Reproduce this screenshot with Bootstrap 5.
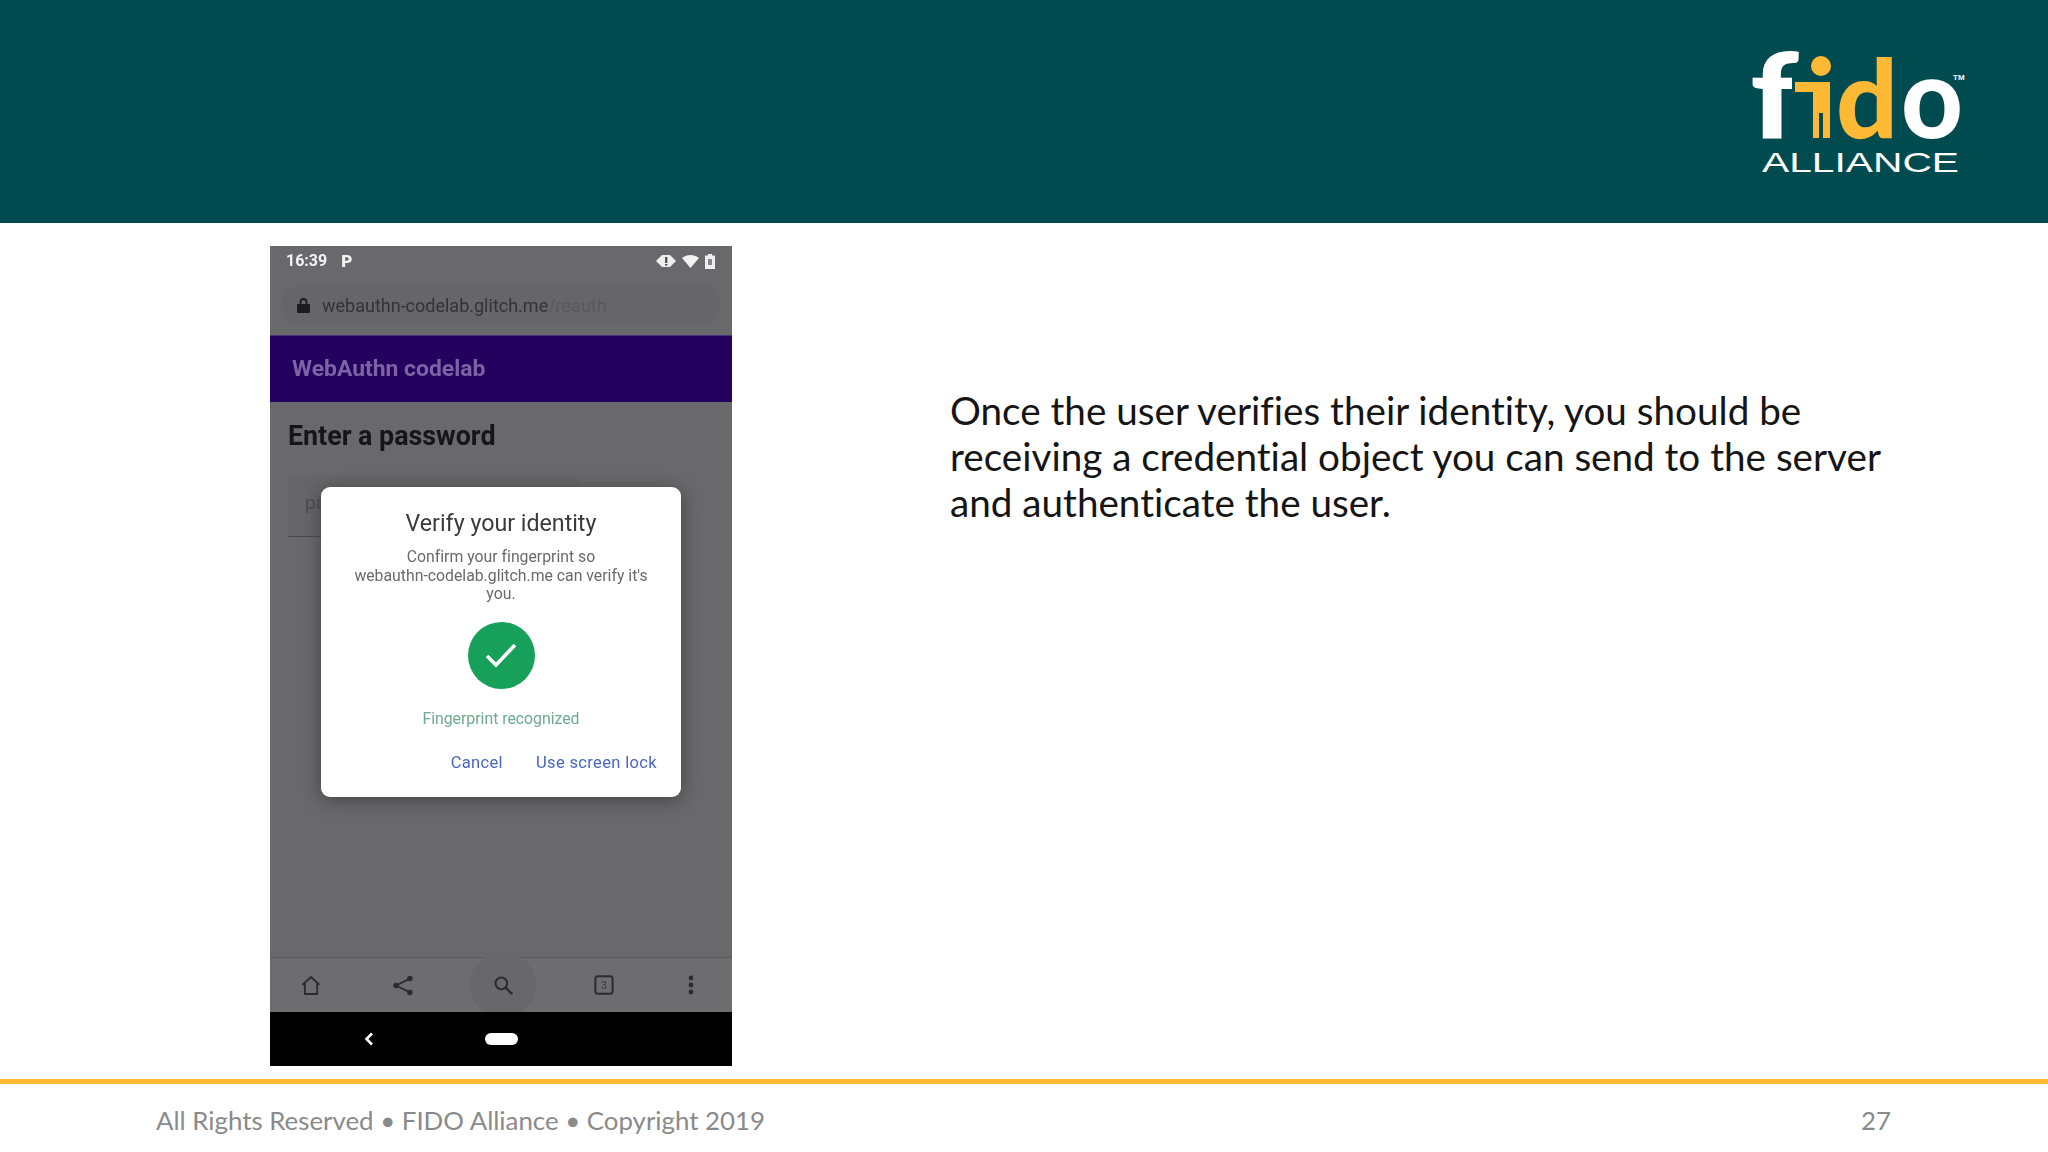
<!doctype html>
<html lang="en">
<head>
<meta charset="utf-8">
<title>FIDO Alliance slide</title>
<link href="https://cdn.jsdelivr.net/npm/bootstrap@5.3.0/dist/css/bootstrap.min.css" rel="stylesheet">
<style>
html,body{height:100%;}
body{font-family:"Lato","Liberation Sans",sans-serif;background:#fff;overflow:hidden;font-variant-ligatures:none;}
.slide-head{height:223px;background:#004b50;flex:none;}
.fido-logo{display:block;width:270px;height:160px;margin:30px 58px 0 0;overflow:visible;}
.slide-main{flex:1 1 auto;min-height:0;padding:23px 0 0 270px;gap:218px;}
.phone{width:462px;height:820px;flex:none;background:#69686b;font-family:"Roboto","Liberation Sans",sans-serif;filter:blur(.55px);}
.status-row{height:36px;padding:0 17px 6px 16px;color:#f2f2f2;font-size:16px;font-weight:700;line-height:1;flex:none;}
.p-glyph{margin-left:14px;font-size:17px;font-weight:900;}
.status-icons{gap:6px;}
.addr-wrap{height:53px;padding:3px 11px 10px 11px;flex:none;}
.addr-pill{height:40px;background:#666568;border-radius:20px;padding-left:16px;gap:12px;font-size:18px;color:#333335;}
.addr-fade{color:#59585c;}
.app-bar{height:67px;background:#24005f;padding-left:22px;font-size:22.9px;font-weight:700;color:#7c63a3;flex:none;border-top:1px solid #4a2f7c;}
.app-body{flex:1 1 auto;padding:19px 19px 0 18px;min-height:0;}
.page-title{font-size:26.8px;font-weight:700;color:#161618;line-height:30px;margin:0;}
.fake-input{margin:25px 0 0 0;height:61px;width:290px;background:#666568;border-bottom:1px solid #4a4a4c;padding:13px 0 0 17px;font-size:19px;color:#4d4d50;}
.verify-box{left:51px;top:241px;width:360px;height:310px;background:#fff;border-radius:9px;box-shadow:0 3px 18px rgba(30,30,30,.5);padding:21px 0 0;}
.verify-title{font-size:23.2px;line-height:30px;color:#3a3a3c;margin:0;}
.verify-copy{font-size:15.8px;line-height:18.5px;color:#6a6a6c;margin:10px 0 0;}
.check-disc{width:67px;height:67px;border-radius:50%;background:#17a05a;margin-top:18px;}
.verify-ok{font-size:15.8px;line-height:18px;color:#6fab8d;margin:21px 0 0;}
.verify-actions{gap:33px;padding-right:24px;margin-top:26px;font-size:16.5px;line-height:18px;color:#4a67bd;letter-spacing:.35px;}
.tool-row{height:55px;background:#6d6c6f;border-top:1px solid #5b5a5d;flex:none;}
.t-a{margin-left:31px;}.t-b{margin-left:72px;}.t-c{margin-left:57px;}.t-d{margin-left:58px;}.t-e{margin-left:74px;}
.search-halo{width:66px;height:66px;border-radius:50%;background:#686769;flex:none;}
.nav-row{height:54px;background:#000;flex:none;}
.nav-back{margin-left:94px;}
.nav-home{width:33px;height:12px;background:#fff;border-radius:6px;margin-left:111px;}
.slide-copy{width:940px;margin-top:141px;font-size:38.65px;line-height:46px;color:#151515;}
.slide-foot{height:73px;flex:none;border-top:5px solid #fdb933;padding:4px 157px 0 156px;font-size:25.85px;color:#8a8a8a;}
</style>
</head>
<body class="d-flex flex-column">
<header class="slide-head d-flex justify-content-end align-items-start">
  <svg class="fido-logo" viewBox="0 0 270 160" role="img" aria-label="FIDO Alliance logo">
    <g font-family="Lato,'Liberation Sans',sans-serif" font-weight="900" fill="#fff">
      <text x="30" y="108" font-size="118" textLength="49" lengthAdjust="spacingAndGlyphs">f</text>
      <text x="116" y="108" font-size="108" fill="#fdb933" textLength="62" lengthAdjust="spacingAndGlyphs">d</text>
      <text x="181" y="108" font-size="112" textLength="62" lengthAdjust="spacingAndGlyphs">o</text>
    </g>
    <rect x="72" y="46" width="10" height="18" fill="#004b50"/>
    <circle cx="101" cy="36" r="10" fill="#fdb933"/>
    <path fill="#fdb933" d="M75 52H110V108H103V83H99V108H93V62H75Z"/>
    <text x="233" y="50" font-family="'Liberation Sans',sans-serif" font-weight="700" font-size="8" fill="#fff">TM</text>
    <text x="42" y="142" font-family="'Liberation Sans',sans-serif" font-size="28" fill="#fff" textLength="197" lengthAdjust="spacingAndGlyphs">ALLIANCE</text>
  </svg>
</header>

<main class="slide-main d-flex align-items-start">
  <div class="phone position-relative d-flex flex-column">
    <div class="status-row d-flex align-items-center justify-content-between">
      <div class="d-flex align-items-center"><span>16:39</span><span class="p-glyph">P</span></div>
      <div class="status-icons d-flex align-items-center">
        <svg width="20" height="14" viewBox="0 0 20 14"><path fill="#eee" d="M0 7 6 1h8l6 6-6 6H6z"/><rect x="9" y="3" width="2.400" height="6" fill="#555"/><rect x="9" y="10" width="2.400" height="1.600" fill="#555"/></svg>
        <svg width="17" height="13" viewBox="0 0 17 13"><path fill="#f2f2f2" d="M0 3C5-1 12-1 17 3L8.500 13Z"/></svg>
        <svg width="10" height="15" viewBox="0 0 10 15"><path fill="#eee" d="M3 0h4v1.500h3V15H0V1.500h3z"/><rect x="3" y="5" width="4" height="6" fill="#888"/></svg>
      </div>
    </div>
    <div class="addr-wrap">
      <div class="addr-pill d-flex align-items-center">
        <svg width="13" height="15" viewBox="0 0 13 15"><path fill="none" stroke="#1d1d1f" stroke-width="1.800" d="M3.500 7V4a3 3 0 0 1 6 0v3"/><rect y="6" width="13" height="9" rx="1" fill="#1d1d1f"/></svg>
        <span>webauthn-codelab.glitch.me<span class="addr-fade">/reauth</span></span>
      </div>
    </div>
    <div class="app-bar d-flex align-items-center">WebAuthn codelab</div>
    <div class="app-body">
      <h1 class="page-title">Enter a password</h1>
      <div class="fake-input">pa</div>
    </div>
    <div class="tool-row d-flex align-items-center">
      <svg class="t-a" width="20" height="21" viewBox="0 0 26 26"><path fill="none" stroke="#2c2c2e" stroke-width="2.400" stroke-linejoin="round" d="M2 12 13 2l11 10M5 10v14h16V10"/></svg>
      <svg class="t-b" width="20" height="21" viewBox="0 0 26 26"><g fill="#2c2c2e"><circle cx="22" cy="4" r="3.600"/><circle cx="4" cy="13" r="3.600"/><circle cx="22" cy="22" r="3.600"/></g><path fill="none" stroke="#2c2c2e" stroke-width="2.400" d="M22 4 4 13l18 9"/></svg>
      <div class="search-halo t-c d-flex align-items-center justify-content-center">
        <svg width="19" height="19" viewBox="0 0 26 26"><circle cx="10" cy="10" r="8" fill="none" stroke="#2c2c2e" stroke-width="2.800"/><path stroke="#2c2c2e" stroke-width="3.200" d="m16 16 9 9"/></svg>
      </div>
      <svg class="t-d" width="20" height="20" viewBox="0 0 22 22"><rect x="1.500" y="1.500" width="19" height="19" rx="3" fill="none" stroke="#2c2c2e" stroke-width="2.200"/><text x="11" y="15.500" text-anchor="middle" font-family="Roboto,sans-serif" font-size="11" fill="#3a3a3c">3</text></svg>
      <svg class="t-e" width="6" height="20" viewBox="0 0 6 20"><g fill="#2c2c2e"><circle cx="3" cy="3" r="2.400"/><circle cx="3" cy="10" r="2.400"/><circle cx="3" cy="17" r="2.400"/></g></svg>
    </div>
    <div class="nav-row d-flex align-items-center">
      <svg class="nav-back" width="10" height="14" viewBox="0 0 10 14"><path fill="none" stroke="#fff" stroke-width="2.600" d="M8 1.500 2.500 7 8 12.500"/></svg>
      <div class="nav-home"></div>
    </div>

    <div class="verify-box position-absolute d-flex flex-column align-items-center text-center">
      <h2 class="verify-title fw-normal">Verify your identity</h2>
      <p class="verify-copy">Confirm your fingerprint so<br>webauthn-codelab.glitch.me can verify it's<br>you.</p>
      <div class="check-disc d-flex align-items-center justify-content-center">
        <svg width="32" height="26" viewBox="0 0 32 26"><path fill="none" stroke="#fff" stroke-width="3.600" d="m2 14 9 9L30 3"/></svg>
      </div>
      <p class="verify-ok">Fingerprint recognized</p>
      <div class="verify-actions d-flex justify-content-end align-self-stretch">
        <span>Cancel</span><span>Use screen lock</span>
      </div>
    </div>
  </div>
  <p class="slide-copy">Once the user verifies their identity, you should be receiving a credential object you can send to the server and authenticate the user.</p>
</main>

<footer class="slide-foot d-flex align-items-center justify-content-between">
  <span>All Rights Reserved • FIDO Alliance • Copyright 2019</span>
  <span>27</span>
</footer>
</body>
</html>
